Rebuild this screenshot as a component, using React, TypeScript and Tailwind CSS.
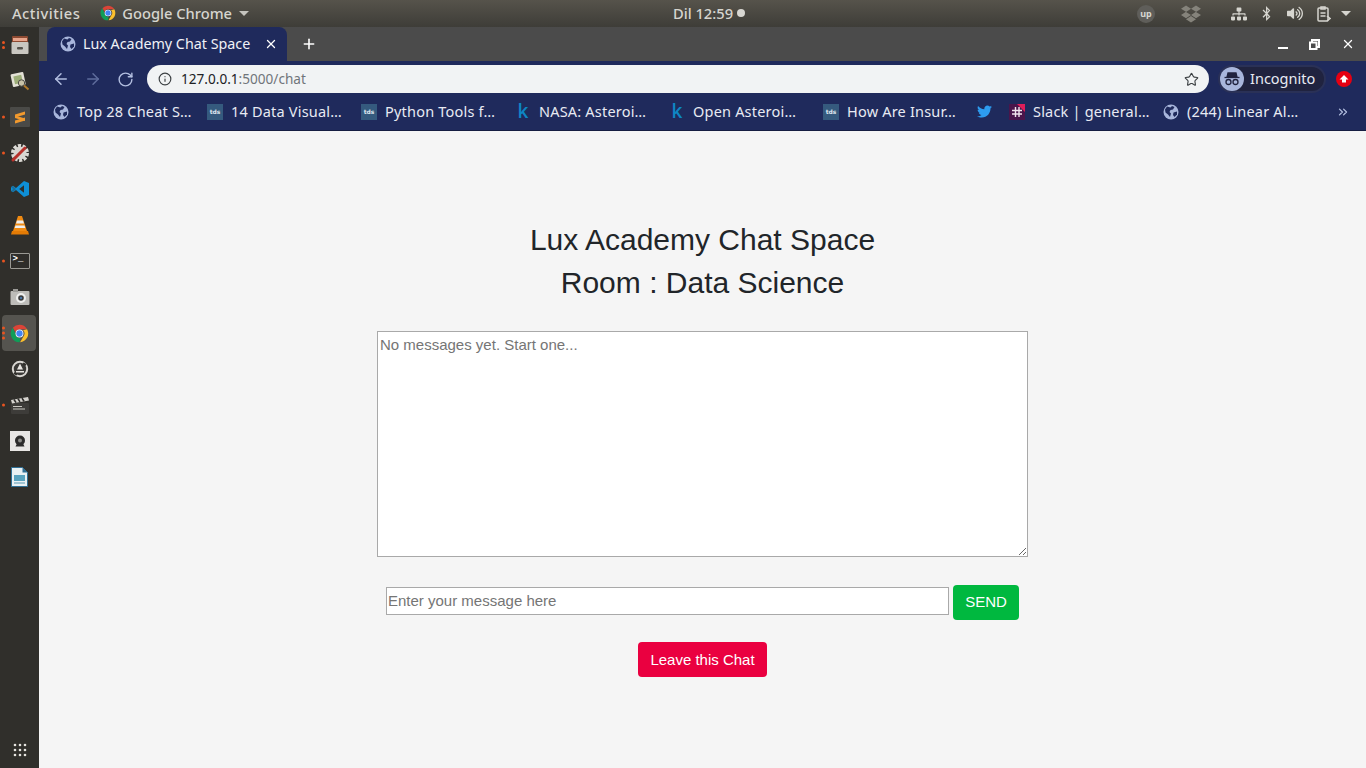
import { ArrowLeft, ArrowRight, RotateCw, Info, Star, X, Plus, ChevronsRight } from 'lucide-react';
import { FaTwitter, FaBluetoothB, FaDropbox, FaSitemap, FaVolumeUp } from 'react-icons/fa';

const uiFont = "font-['Noto_Sans','Open_Sans',sans-serif]";

function ChromeLogo({ size = 18 }: { size?: number }) {
  return (
    <svg width={size} height={size} viewBox="0 0 48 48">
      <path d="M24 2a22 22 0 0 1 19.05 11H24a11 11 0 0 0-10.4 7.4L7.2 9.6A22 22 0 0 1 24 2z" fill="#db4437" />
      <path d="M43.05 13A22 22 0 0 1 25.5 46l9.6-16.5A11 11 0 0 0 33 16z" fill="#fbc02d" />
      <path d="M7.2 9.6 16.7 32a11 11 0 0 0 8.8 3l-1 11A22 22 0 0 1 7.2 9.6z" fill="#0f9d58" />
      <circle cx="24" cy="24" r="10" fill="#fff" />
      <circle cx="24" cy="24" r="8" fill="#4285f4" />
    </svg>
  );
}

function Globe({ color = '#a8b6dc' }: { color?: string }) {
  return (
    <svg width="16" height="16" viewBox="0 0 16 16" className="shrink-0">
      <circle cx="8" cy="8" r="7.5" fill={color} />
      <path d="M4 2.5 7.5 3.5 9 2 11.5 3 10 5.5 7.5 6 6.5 8 8 9.5 7 13 5 10.5 2.5 8.5 2 5.5z" fill="#1f2a5c" />
      <path d="M10.5 8.5 14 7.5 14 10.5 11.5 13 10 11z" fill="#1f2a5c" />
    </svg>
  );
}

function Tds() {
  return (
    <span className="flex h-4 w-4 shrink-0 items-center justify-center bg-[#355a7e] font-['DejaVu_Sans',sans-serif] text-[6px] font-bold text-[#dfe7ef]">
      tds
    </span>
  );
}

function Kaggle() {
  return <span className="flex h-4 w-4 shrink-0 items-center justify-center font-['Open_Sans',sans-serif] text-[19px] font-semibold leading-none text-[#0e86c4]">k</span>;
}

function Slack() {
  return (
    <svg width="16" height="16" viewBox="0 0 16 16" className="shrink-0">
      <rect width="16" height="16" fill="#4a154b" />
      <path d="M8 0h8v8z" fill="#e01e5a" />
      <path d="M6.5 3v10M10 3v10M3 6.5h10M3 10h10" stroke="#f2e4ee" strokeWidth="1.4" />
    </svg>
  );
}

function Bookmark({ icon, label, width = 'w-[154px]' }: { icon: React.ReactNode; label: string; width?: string }) {
  return (
    <div className={`flex shrink-0 items-center gap-2 ${width}`}>
      {icon}
      <span className="whitespace-nowrap text-[14.5px] tracking-[0.2px] text-[#e8eaf3]">{label}</span>
    </div>
  );
}

const dockRows = [
  { id: 'files', dots: 2 },
  { id: 'viewer', dots: 0 },
  { id: 'sublime', dots: 1 },
  { id: 'settings', dots: 1 },
  { id: 'vscode', dots: 0 },
  { id: 'vlc', dots: 0 },
  { id: 'terminal', dots: 1 },
  { id: 'camera', dots: 0 },
  { id: 'chrome', dots: 3 },
  { id: 'update', dots: 0 },
  { id: 'clapper', dots: 1 },
  { id: 'ghost', dots: 0 },
  { id: 'writer', dots: 0 },
];

function DockIcon({ id }: { id: string }) {
  switch (id) {
    case 'files':
      return (
        <svg width="20" height="20" viewBox="0 0 20 20">
          <rect x="2" y="1" width="16" height="7" rx="1" fill="#8c4a32" />
          <rect x="3" y="3" width="14" height="3" fill="#e8a58c" />
          <rect x="1.5" y="7" width="17" height="12" rx="1" fill="#c9c7c1" />
          <rect x="7" y="12" width="6" height="2.5" rx="1" fill="#55524c" />
        </svg>
      );
    case 'viewer':
      return (
        <svg width="22" height="22" viewBox="0 0 22 22">
          <rect x="2.5" y="3" width="13" height="13" rx="1" fill="#e3e1d6" transform="rotate(-12 9 9)" />
          <rect x="5" y="5.5" width="8" height="8" fill="#9cad78" transform="rotate(-12 9 9)" />
          <circle cx="12.5" cy="13" r="3.2" fill="#c9c3a8" stroke="#4c4a44" strokeWidth="1" />
          <path d="M15 15.5 19.5 19.5" stroke="#b07a2a" strokeWidth="2" />
        </svg>
      );
    case 'sublime':
      return (
        <span className="flex h-5 w-5 items-center justify-center rounded-[1px] bg-[#4a4a47]">
          <svg width="14" height="15" viewBox="0 0 14 15" fill="#f29a2e">
            <path d="M2 4.5 12 1.5v3L2 7.5z" />
            <path d="M2 5.5 12 8.5V11L2 8z" />
            <path d="M2 10.5 12 7.5v3L2 13.5z" />
          </svg>
        </span>
      );
    case 'settings':
      return (
        <svg width="20" height="20" viewBox="0 0 20 20">
          <circle cx="10" cy="10" r="7" fill="none" stroke="#dcdad5" strokeWidth="4" strokeDasharray="3 1.4" />
          <circle cx="10" cy="10" r="6.5" fill="#d8d6d1" />
          <path d="M3 17 15 5" stroke="#b8312b" strokeWidth="3" strokeLinecap="round" />
        </svg>
      );
    case 'vscode':
      return (
        <svg width="18" height="18" viewBox="0 0 18 18">
          <path d="M13 1 18 3v12l-5 2-8-7-3 2.3L0 11V7l2-1.3L5 8z" fill="#0e8fd6" />
          <path d="M13 5.3 8.2 9l4.8 3.7z" fill="#302f2b" />
          <path d="M0 7.5 2 6l3 3-3 3-2-1.2L2.3 9z" fill="#302f2b" opacity="0.35" />
        </svg>
      );
    case 'vlc':
      return (
        <svg width="18" height="20" viewBox="0 0 18 20">
          <path d="M7 1h4l5 15H2z" fill="#ef8a12" />
          <path d="M6 5.5h6l1 3H5zM4.5 10.5h9l.8 2.5H3.7z" fill="#eee" />
          <path d="M1 16h16l1 3.5H0z" fill="#e37b05" />
        </svg>
      );
    case 'terminal':
      return (
        <span className="flex h-[16px] w-5 items-start rounded-[1px] border border-[#9a9994] bg-[#2e2d2a] px-[2px] font-['Liberation_Mono',monospace] text-[9px] font-bold leading-[11px] text-white">
          {'>_'}
        </span>
      );
    case 'camera':
      return (
        <svg width="20" height="18" viewBox="0 0 20 18">
          <rect x="0.5" y="3" width="19" height="14" rx="1" fill="#bdbcb8" />
          <rect x="3" y="1" width="5" height="3" fill="#9c9b97" />
          <circle cx="11" cy="10" r="5" fill="#eeeeec" />
          <circle cx="11" cy="10" r="2.8" fill="#3b3b3b" />
          <circle cx="11" cy="10" r="1.2" fill="#4a78a8" />
        </svg>
      );
    case 'chrome':
      return <ChromeLogo size={19} />;
    case 'update':
      return (
        <svg width="18" height="18" viewBox="0 0 18 18">
          <circle cx="9" cy="9" r="7.2" fill="#3a3936" stroke="#d8d6d1" strokeWidth="2" />
          <path d="M6 9.5 9 3.5l3 6zM5 11h8v1.5H5z" fill="#e8e6e1" />
          <path d="M3 13 6 14.5M12 3.5l3 1.5" stroke="#302f2b" strokeWidth="2" />
        </svg>
      );
    case 'clapper':
      return (
        <svg width="20" height="19" viewBox="0 0 20 19">
          <rect x="1" y="7" width="18" height="11" rx="1" fill="#3d3c39" />
          <path d="M1 4 18 1l1 3.4L2 7.5z" fill="#d5d3ce" />
          <path d="M4 3.5 6 6.6M8 2.8l2 3.1M12 2.1l2 3.1" stroke="#2e2d2a" strokeWidth="1.6" />
          <path d="M3 10.5h9M3 13h12" stroke="#c9c7c1" strokeWidth="1.2" />
        </svg>
      );
    case 'ghost':
      return (
        <span className="flex h-5 w-5 items-center justify-center bg-[#e8e6e4]">
          <svg width="14" height="14" viewBox="0 0 14 14">
            <circle cx="7" cy="6.5" r="5" fill="#2c2b2a" />
            <path d="M2.5 12.5h9L10 9.5H4z" fill="#2c2b2a" />
            <circle cx="7" cy="6.5" r="2" fill="#8a8986" />
          </svg>
        </span>
      );
    default:
      return (
        <svg width="17" height="20" viewBox="0 0 17 20">
          <path d="M0.5 0.5h11l5 5v14H.5z" fill="#e9f1f4" stroke="#2f6f94" />
          <path d="M11.5.5v5h5z" fill="#2f6f94" />
          <rect x="3" y="8" width="11" height="6" fill="#58a3bf" />
          <path d="M3 16h11" stroke="#88b6c8" strokeWidth="1.5" />
        </svg>
      );
  }
}

function Dock() {
  return (
    <aside className="flex w-[39px] shrink-0 flex-col bg-[#302f2b]">
      <div className="flex flex-1 flex-col">
        {dockRows.map((row) => (
          <div key={row.id} className="relative flex h-9 items-center justify-center">
            {row.id === 'chrome' && <div className="absolute bottom-0 left-[2px] right-[3px] top-0 rounded-[4px] bg-[#55544f]" />}
            {row.dots > 0 && (
              <div className="absolute left-[2px] top-1/2 flex -translate-y-1/2 flex-col gap-[2px]">
                {Array.from({ length: row.dots }).map((_, i) => (
                  <span key={i} className="h-[3px] w-[3px] rounded-full bg-[#e95420]" />
                ))}
              </div>
            )}
            <div className="relative flex items-center justify-center">
              <DockIcon id={row.id} />
            </div>
          </div>
        ))}
      </div>
      <div className="flex h-9 items-center justify-center">
        <svg width="14" height="14" viewBox="0 0 14 14" fill="#e4e3df">
          {[2, 7, 12].flatMap((y) => [2, 7, 12].map((x) => <circle key={`${x}-${y}`} cx={x} cy={y} r="1.3" />))}
        </svg>
      </div>
    </aside>
  );
}

export default function App() {
  return (
    <div className={`flex h-[768px] w-[1366px] flex-col overflow-hidden bg-[#f5f5f5] ${uiFont}`}>
      {/* gnome top bar */}
      <header className="flex h-[27px] shrink-0 items-center justify-between bg-gradient-to-b from-[#56534b] to-[#3e3d38] pl-3 pr-[14px] text-[14.7px] font-medium text-[#d6d5cf]">
        <div className="flex w-[269px] items-center">
          <span className="tracking-[0.5px]">Activities</span>
          <span className="ml-5 flex items-center gap-[6px]">
            <ChromeLogo size={16} />
            Google Chrome
            <span className="ml-[1px] h-0 w-0 border-x-[5px] border-t-[5px] border-x-transparent border-t-[#c5c4be]" />
          </span>
        </div>
        <div className="flex items-center gap-[4px]">
          <span>Dil 12:59</span>
          <span className="h-2 w-2 rounded-full bg-[#d8d7d2]" />
        </div>
        <div className="flex w-[215px] items-center text-[#d6d5cf]">
          <span className="flex h-[18px] w-[18px] items-center justify-center rounded-full bg-[#5f5e5a] text-[9px] font-bold">up</span>
          <FaDropbox className="ml-[26px] h-[20px] w-[20px] text-[#85837b]" />
          <FaSitemap className="ml-[30px] h-[16px] w-[16px]" />
          <FaBluetoothB className="ml-[14px] h-[15px] w-[11px]" />
          <FaVolumeUp className="ml-[15px] h-[15px] w-[16px]" />
          <svg width="14" height="16" viewBox="0 0 14 16" className="ml-[14px]" fill="none" stroke="currentColor" strokeWidth="1.5">
            <rect x="1" y="2" width="10" height="13" rx="1" />
            <path d="M4 1h4v2H4zM3.5 7h5M3.5 10h5M10 10l3 2.5-3 2.5" />
          </svg>
          <span className="ml-[10px] h-0 w-0 border-x-[5px] border-t-[5px] border-x-transparent border-t-[#d6d5cf]" />
        </div>
      </header>

      <div className="flex min-h-0 flex-1">
        <Dock />

        <div className="flex min-w-0 flex-1 flex-col">
          {/* tab strip */}
          <div className="flex h-[34px] shrink-0 items-end justify-between bg-[#4b4b4b] pl-2 pr-[11px]">
            <div className="flex items-center">
              <div className="flex h-[34px] w-[240px] items-center rounded-t-lg bg-[#1f2a5c] pl-[13px] pr-[9px]">
                <Globe />
                <span className="ml-[7px] flex-1 whitespace-nowrap text-[14.3px] text-[#f0f1f6]">Lux Academy Chat Space</span>
                <X className="h-[14px] w-[14px] text-white" strokeWidth={2.2} />
              </div>
              <Plus className="ml-[14px] h-[16px] w-[16px] text-white" strokeWidth={2.4} />
            </div>
            <div className="flex h-[34px] items-center gap-[21px] text-white">
              <span className="mt-[8px] h-[2px] w-[10px] bg-white" />
              <svg width="11" height="11" viewBox="0 0 11 11" fill="none" stroke="#fff" strokeWidth="2">
                <path d="M3 3V1h7v7H8M1 3.5h6.5V10H1z" />
              </svg>
              <X className="h-[14px] w-[14px]" strokeWidth={2.2} />
            </div>
          </div>

          {/* toolbar */}
          <div className="flex h-[32px] shrink-0 items-start bg-[#1f2a5c] pl-[13px] pr-[14px] pt-[4px]">
            <div className="flex h-7 items-center gap-[14px] text-[#b3bfe0]">
              <ArrowLeft className="h-[18px] w-[18px]" strokeWidth={2} />
              <ArrowRight className="h-[18px] w-[18px] text-[#5f6d9c]" strokeWidth={2} />
              <RotateCw className="ml-[1px] h-[17px] w-[17px]" strokeWidth={2} />
            </div>
            <div className="ml-[13px] flex h-7 flex-1 items-center rounded-full bg-[#f1f3f4] pl-[11px] pr-[10px]">
              <Info className="h-[14px] w-[14px] text-[#3c4043]" strokeWidth={2} />
              <span className="ml-[9px] flex-1 text-[13.6px] text-[#202124]">
                127.0.0.1<span className="text-[#70757a]">:5000/chat</span>
              </span>
              <Star className="h-[15px] w-[15px] text-[#3c4043]" strokeWidth={1.8} />
            </div>
            <div className="ml-[9px] flex h-7 w-[108px] items-center rounded-full border-2 border-[#2a3157] bg-[#20233f] text-[14.5px] text-[#e8eaf3]">
              <span className="flex h-6 w-6 items-center justify-center rounded-full bg-[#a8b6dc]">
                <svg width="18" height="16" viewBox="0 0 18 16" fill="none" stroke="#20233f" strokeWidth="1.3">
                  <path d="M5 2h8l1 4H4z" fill="#20233f" />
                  <path d="M1.5 6.5h15" />
                  <circle cx="5.5" cy="11" r="2.5" />
                  <circle cx="12.5" cy="11" r="2.5" />
                </svg>
              </span>
              <span className="ml-[6px]">Incognito</span>
            </div>
            <div className="ml-[10px] flex h-7 items-center">
              <span className="flex h-4 w-4 items-center justify-center rounded-full bg-[#e60012]">
                <svg width="10" height="10" viewBox="0 0 10 10" fill="#fff">
                  <path d="M5 1 9.5 5.5H7v3H3v-3H.5z" />
                </svg>
              </span>
            </div>
          </div>

          {/* bookmarks bar */}
          <div className="flex h-[38px] shrink-0 items-center border-b border-[#161d42] bg-[#1f2a5c] pl-[14px] pr-4">
            <Bookmark icon={<Globe />} label="Top 28 Cheat S…" />
            <Bookmark icon={<Tds />} label="14 Data Visual…" />
            <Bookmark icon={<Tds />} label="Python Tools f…" />
            <Bookmark icon={<Kaggle />} label="NASA: Asteroi…" />
            <Bookmark icon={<Kaggle />} label="Open Asteroi…" />
            <Bookmark icon={<Tds />} label="How Are Insur…" />
            <div className="flex w-[32px] shrink-0 items-center">
              <FaTwitter className="h-[15px] w-[15px] text-[#2d9cf0]" />
            </div>
            <Bookmark icon={<Slack />} label="Slack | general…" />
            <Bookmark icon={<Globe />} label="(244) Linear Al…" />
            <div className="flex flex-1 justify-end">
              <ChevronsRight className="h-[14px] w-[14px] text-[#b3bfe0]" strokeWidth={2.2} />
            </div>
          </div>

          {/* page */}
          <main className="flex flex-1 flex-col items-center bg-[#f5f5f5] pt-[87px] font-['Liberation_Sans',Arial,sans-serif]">
            <h1 className="text-center text-[30px] font-normal leading-[43px] text-[#212529]">
              Lux Academy Chat Space
              <br />
              Room : Data Science
            </h1>
            <textarea
              readOnly
              placeholder="No messages yet. Start one..."
              className="mt-[27px] h-[226px] w-[651px] resize border border-[#a9a9a9] bg-white px-[2px] py-[2px] text-[15px] outline-none placeholder:text-[#757575]"
            />
            <div className="mt-[28px] flex items-start gap-1">
              <input
                readOnly
                placeholder="Enter your message here"
                className="mt-[2px] h-7 w-[563px] border border-[#a9a9a9] bg-white px-[1px] pb-[2px] text-[15px] outline-none placeholder:text-[#757575]"
              />
              <button className="h-[35px] w-[66px] rounded-[4px] bg-[#00b83f] text-[15px] text-white">SEND</button>
            </div>
            <button className="mt-[22px] h-[35px] w-[129px] rounded-[4px] bg-[#ea0040] pt-[1px] text-[15px] text-white">Leave this Chat</button>
          </main>
        </div>
      </div>
    </div>
  );
}
